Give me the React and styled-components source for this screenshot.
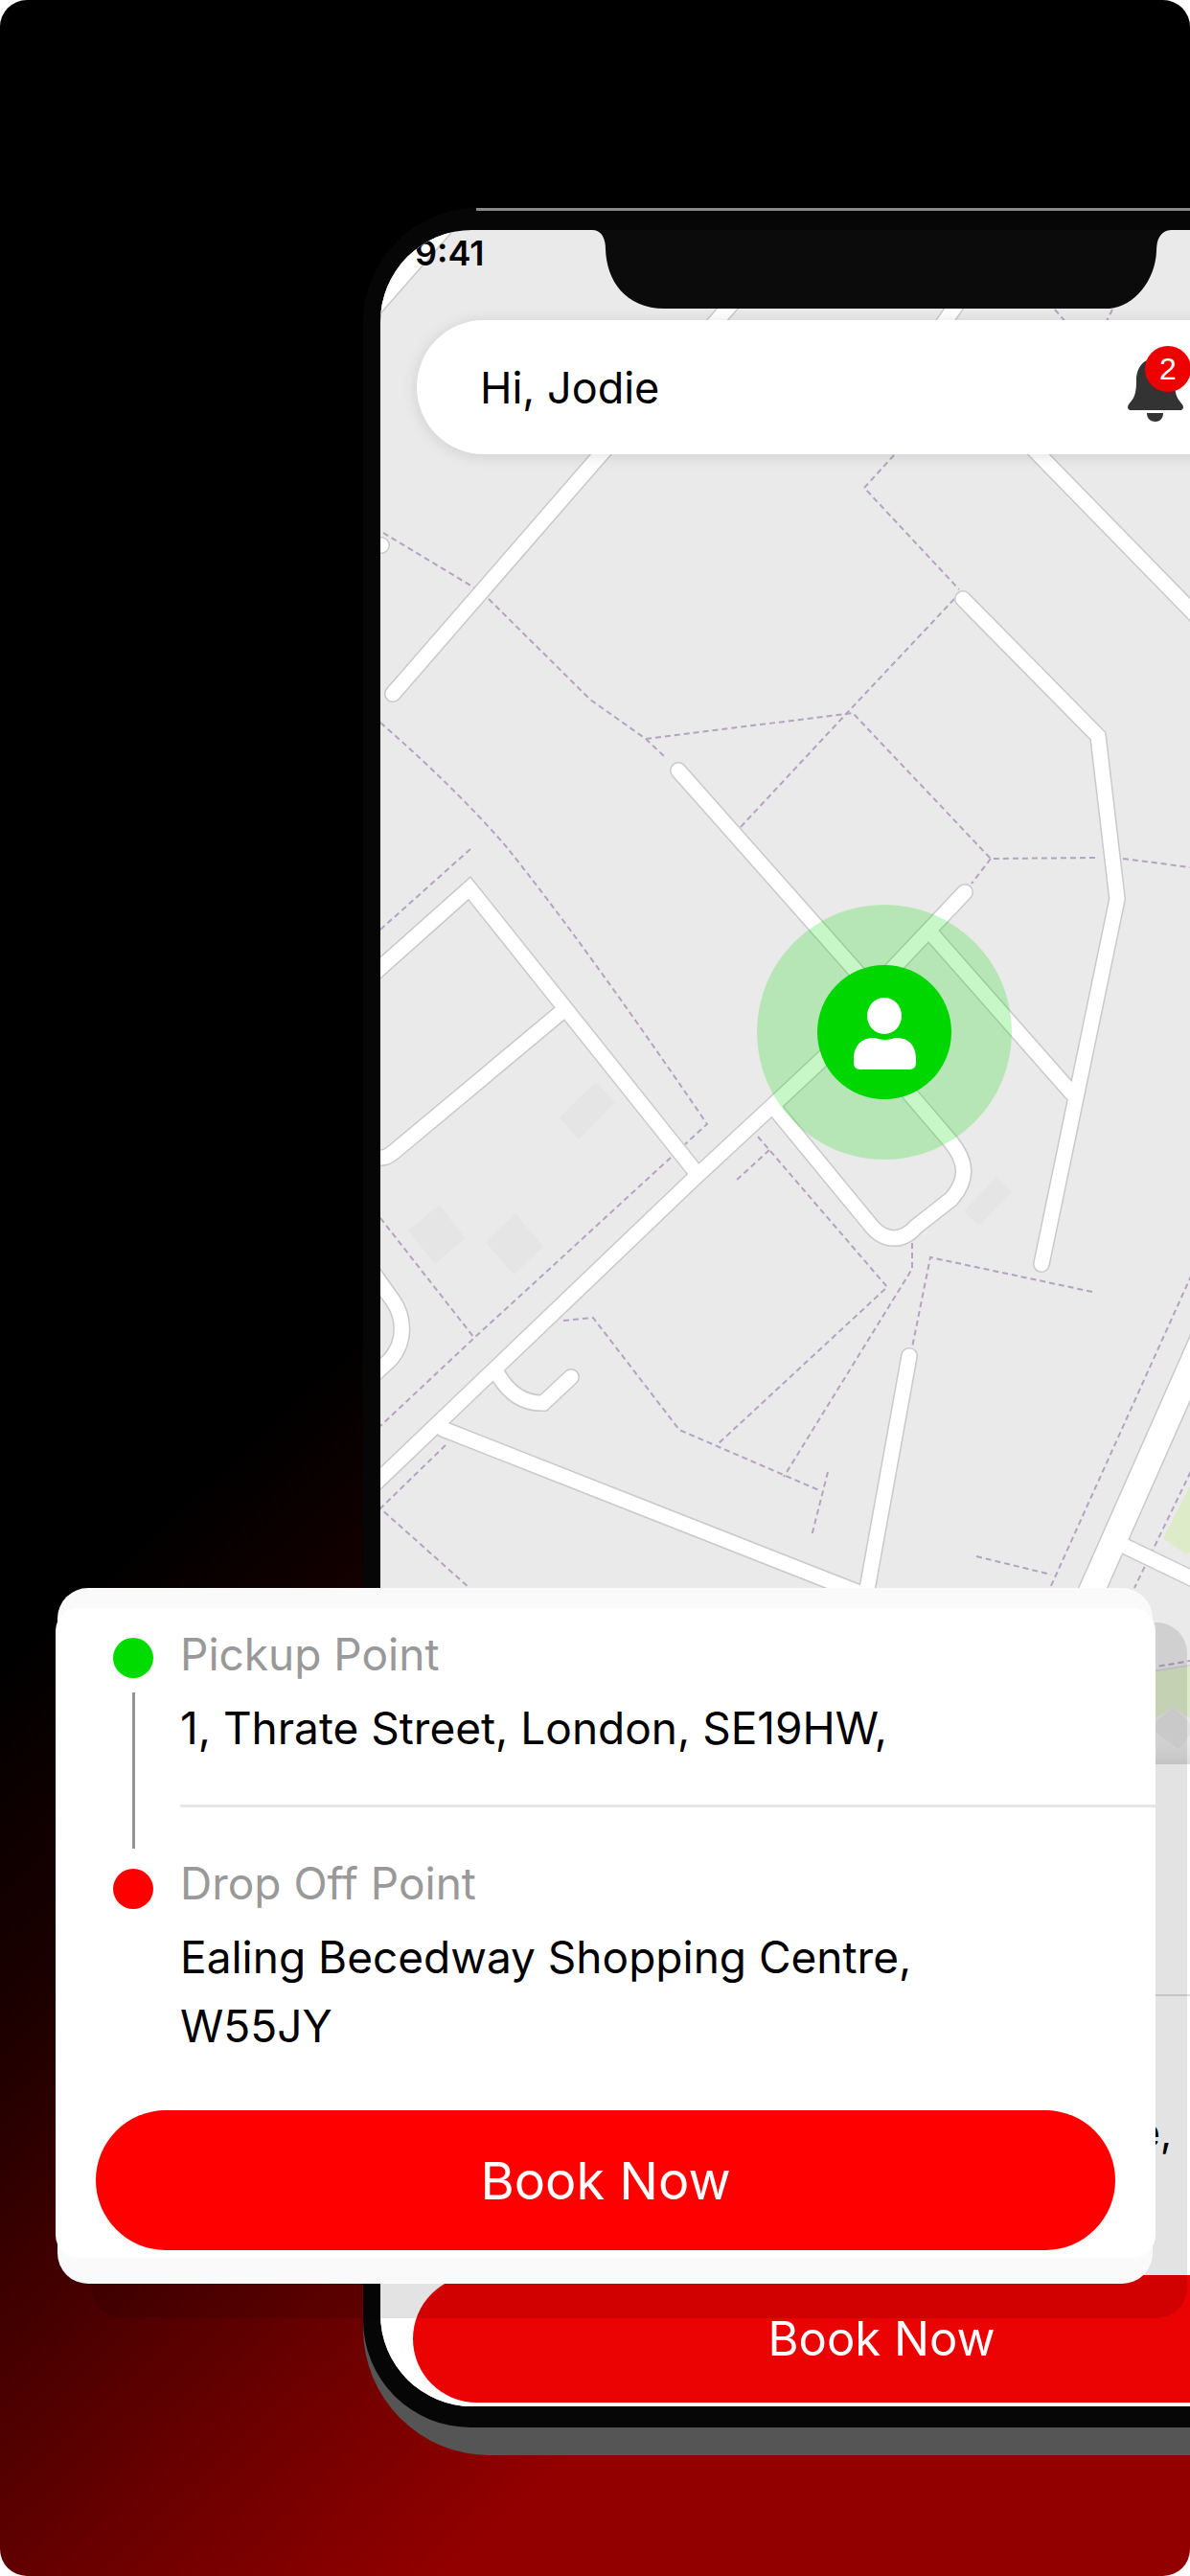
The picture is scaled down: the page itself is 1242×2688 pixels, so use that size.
import React from "react";
import styled, { createGlobalStyle } from "styled-components";

const roads = [
  "M780 298 L410 724",
  "M1012 298 L965 366",
  "M1040 429 L1242 636 L1300 695",
  "M390 569 L398 569",
  "M708 804 L894 1014 L920 1045 L905 1085 L950 1142 L992 1191 C1010 1213 1010 1231 993 1251 L956 1280 C942 1296 924 1296 910 1280 L808 1156",
  "M1007 931 L922 1021 L868 1096 L806 1154 L724 1230 L380 1559",
  "M971 973 L1119 1141",
  "M1005 625 L1146 768 L1166 938 L1087 1319",
  "M380 1025 L490 927 L727 1224",
  "M380 1208 L398 1208 Q404 1208 411 1202 L586 1056",
  "M385 1322 L410 1357 C422 1374 424 1400 407 1419 L385 1439",
  "M520 1435 Q538 1465 567 1464 L596 1437",
  "M462 1491 L902 1664",
  "M949 1415 L893 1725",
  "M1171 1612 L1300 1674",
];

const wideRoads = ["M1281 1340 L1100 1749", "M478 214 L380 326"];

const paths = [
  "M400 556 L493 612 L509 624 L616 730 L674 771 L693 789",
  "M674 771 L890 744 L1034 896 L1147 895",
  "M1034 896 L1014 922",
  "M933 475 L902 509 L1001 615",
  "M996 625 L883 745 L772 864",
  "M1172 896 L1242 905 L1300 912",
  "M397 754 Q475 822 528 883 Q610 985 738 1173 L715 1194",
  "M700 1208 L495 1396 L397 1488",
  "M397 970 L492 885",
  "M397 1271 L495 1396",
  "M791 1186 L926 1343 L748 1508",
  "M803 1200 L768 1232",
  "M952 1297 L952 1324 L818 1541",
  "M588 1378 L619 1375 L709 1492 L857 1556",
  "M864 1536 L847 1603",
  "M1140 1348 L971 1312 L952 1406",
  "M465 1508 L397 1574 L490 1657",
  "M1260 1294 L1096 1657",
  "M1019 1624 L1097 1643",
  "M1260 1500 L1184 1657",
  "M1101 323 L1120 345",
  "M1161 323 L1150 345",
  "M1190 1742 L1260 1730",
];

const buildings = [
  "M622 1129 L642 1150 L604 1189 L584 1166Z",
  "M459 1257 L485 1292 L454 1319 L426 1284Z",
  "M538 1266 L567 1301 L536 1330 L507 1296Z",
  "M1040 1228 L1056 1244 L1022 1279 L1006 1264Z",
];

const StreetMap = () => (
  <MapSvg viewBox="397 240 1046 1601" preserveAspectRatio="xMidYMin slice" aria-hidden="true">
    {buildings.map((d) => <path key={d} d={d} fill="#e5e5e5" />)}
    <path d="M1260 1516 L1214 1605 L1238 1622 L1260 1610Z" fill="#ddebc8" />
    <path d="M1190 1747 L1260 1736 L1260 1804 L1224 1781 L1190 1803Z" fill="#ddebc8" />
    <path d="M1190 1746 L1260 1735" stroke="#d6d6d6" strokeWidth="2" />
    <path d="M1224 1781 L1248 1804 L1230 1825 L1200 1803Z" fill="#e2e2e2" />
    <g fill="none" stroke="#b3a3c0" strokeWidth="2" strokeDasharray="6 4">
      {paths.map((d) => <path key={d} d={d} />)}
    </g>
    {/* casing first, white fill above, so that junctions stay open */}
    <g fill="none" stroke="#c9c9c9" strokeLinecap="round">
      {roads.map((d) => <path key={d} d={d} strokeWidth="18" />)}
      {wideRoads.map((d) => <path key={d} d={d} strokeWidth="29" />)}
    </g>
    <g fill="none" stroke="#fff" strokeLinecap="round">
      {roads.map((d) => <path key={d} d={d} strokeWidth="15" />)}
      {wideRoads.map((d) => <path key={d} d={d} strokeWidth="26" />)}
    </g>
    <circle cx="923" cy="1077" r="133" fill="#00dc00" fillOpacity="0.22" />
    <circle cx="923" cy="1077" r="70" fill="#00d600" />
    <ellipse cx="923" cy="1060" rx="18" ry="19" fill="#fff" />
    <path
      d="M891 1105 C891 1091 900 1082 913 1083 Q924 1087 934 1083 C948 1082 956 1091 956 1105 V1109 Q956 1116 949 1116 H898 Q891 1116 891 1109Z"
      fill="#fff"
    />
  </MapSvg>
);

const App = () => {
  return (
    <Stage>
      <GlobalStyle />
      <Chassis>
        <Bezel>
          <Screen>
            <StreetMap />
            <Notch viewBox="0 0 604 82" aria-hidden="true">
              <path
                d="M0 0 C10 0 14 9 14 20 C15 52 34 82 76 82 H540 C566 80 588 52 589 22 C589 10 593 1 604 0Z"
                fill="#0b0b0b"
              />
            </Notch>
            <StatusBar>9:41</StatusBar>
            <Greeting>
              <p>Hi, Jodie</p>
              <BellButton type="button" aria-label="Notifications">
                <svg viewBox="0 0 58 72" aria-hidden="true">
                  <path
                    d="M29 6 C17 6 9 15 9 29 C9 45 6 48 1 54 C-1 57 0 60 4 60 H54 C58 60 59 57 57 54 C52 48 49 45 49 29 C49 15 41 6 29 6Z"
                    fill="#333"
                  />
                  <path d="M20 63 H37 C37 69 33 72 29 72 C24 72 20 69 20 63Z" fill="#333" />
                </svg>
                <Badge>2</Badge>
              </BellButton>
            </Greeting>
            <Sheet>
              <SheetStop>
                <Address $small>Centre,</Address>
              </SheetStop>
              <BookButton type="button" $small>Book Now</BookButton>
            </Sheet>
          </Screen>
        </Bezel>
      </Chassis>

      <Card>
        <CardInner>
          <Route>
            <Rail>
              <Dot $color="#00dc00" />
              <Line />
              <Dot $color="#ff0000" />
            </Rail>
            <Stops>
              <Stop $divided>
                <Label>Pickup Point</Label>
                <Address>1, Thrate Street, London, SE19HW,</Address>
              </Stop>
              <Stop>
                <Label>Drop Off Point</Label>
                <Address>
                  Ealing Becedway Shopping Centre,
                  <br />
                  W55JY
                </Address>
              </Stop>
            </Stops>
          </Route>
          <BookButton type="button">Book Now</BookButton>
        </CardInner>
      </Card>
    </Stage>
  );
};

const GlobalStyle = createGlobalStyle`
  * {
    box-sizing: border-box;
  }
  body {
    margin: 0;
    background: #fff;
    font-family: Inter, "Liberation Sans", sans-serif;
  }
  p {
    margin: 0;
  }
  button {
    border: none;
    padding: 0;
    font-family: inherit;
    cursor: pointer;
  }
`;

/* the phone and the card share one grid cell, the card lies on top */
const Stage = styled.main`
  display: grid;
  align-items: start;
  min-height: 100vh;
  padding-bottom: 126px;
  overflow: hidden;
  border-radius: 28px;
  background: linear-gradient(137deg, #000 45%, #1c0000 55%, #3c0000 62%, #6b0000 72%, #920000 81%);

  > * {
    grid-area: 1 / 1;
  }
`;

const Chassis = styled.div`
  margin: 217px -219px 0 379px;
  padding-bottom: 29px;
  border-radius: 120px 120px 132px 132px;
  background: linear-gradient(#060606 50%, #555 50%);
`;

const Bezel = styled.div`
  padding: 23px 18px 22px;
  border-radius: 120px 120px 112px 112px;
  background: linear-gradient(#8a8a8a, #8a8a8a) 118px 0 / 100% 3px no-repeat, #060606;
`;

const Screen = styled.div`
  position: relative;
  overflow: hidden;
  border-radius: 96px;
  background: #eaeaea;
`;

const MapSvg = styled.svg`
  position: absolute;
  top: 0;
  left: 0;
  width: 100%;
`;

const Notch = styled.svg`
  position: absolute;
  top: 0;
  left: 50%;
  width: 604px;
  transform: translateX(-50%);
`;

const StatusBar = styled.div`
  position: relative;
  height: 94px;
  padding: 4px 36px;
  font-size: 36px;
  font-weight: 600;
  line-height: 40px;
`;

const Greeting = styled.header`
  position: relative;
  display: flex;
  align-items: center;
  justify-content: space-between;
  height: 140px;
  margin: 0 38px 1367px;
  padding: 0 170px 0 66px;
  border-radius: 70px;
  background: #fff;
  box-shadow: 0 2px 16px rgba(0, 0, 0, 0.12);
  font-size: 45px;
`;

const BellButton = styled.button`
  position: relative;
  width: 58px;
  height: 72px;
  background: none;

  svg {
    display: block;
    width: 100%;
  }
`;

const Badge = styled.span`
  position: absolute;
  top: -7px;
  right: -8px;
  width: 48px;
  height: 48px;
  border-radius: 50%;
  background: #ee0000;
  color: #fff;
  font-family: "Liberation Sans", sans-serif;
  font-size: 32px;
  line-height: 48px;
  text-align: center;
`;

const Sheet = styled.section`
  position: relative;
  padding: 240px 34px 4px;
  background: #fff;
  box-shadow: 0 -2px 20px rgba(0, 0, 0, 0.1);
`;

const SheetStop = styled.div`
  margin: 0 -34px 113px 0;
  padding: 106px 220px 0 0;
  border-top: 2px solid #dedede;
  text-align: right;
`;

const Card = styled.section`
  position: relative;
  margin: 1657px 39px 0 60px;
  padding: 21px 0 27px;
  border-radius: 32px;
  background: #fafafa;
  box-shadow: 36px 36px 0 rgba(0, 0, 0, 0.11);
`;

const CardInner = styled.div`
  margin: 0 -3px 0 -2px;
  padding-bottom: 8px;
  border-radius: 24px;
  background: #fff;

  > button {
    margin: 52px 42px 0;
    width: calc(100% - 84px);
  }
`;

const Route = styled.div`
  display: flex;
  gap: 28px;
  padding-left: 60px;
`;

const Rail = styled.div`
  display: flex;
  flex-direction: column;
  align-items: center;
  padding-top: 31px;
`;

const Dot = styled.span`
  width: 42px;
  height: 42px;
  border-radius: 50%;
  background: ${(props) => props.$color};
`;

const Line = styled.span`
  width: 3px;
  height: 163px;
  margin: 15px 0 21px;
  background: #949494;
`;

const Stops = styled.div`
  flex: 1;
  padding-top: 20px;
`;

const Stop = styled.div`
  ${(props) => props.$divided && `
    margin-bottom: 51px;
    padding-bottom: 44px;
    border-bottom: 3px solid #e5e5e5;
  `}
`;

const Label = styled.p`
  margin-bottom: 13px;
  color: #999;
  font-size: 46px;
  line-height: 56px;
`;

const Address = styled.p`
  color: #000;
  font-size: ${(props) => (props.$small ? "42px" : "46px")};
  line-height: 72px;
  white-space: nowrap;
`;

const BookButton = styled.button`
  display: block;
  width: 100%;
  height: ${(props) => (props.$small ? "133px" : "146px")};
  border-radius: 73px;
  background: ${(props) => (props.$small ? "#eb0202" : "#ff0000")};
  color: #fff;
  font-size: ${(props) => (props.$small ? "49px" : "54px")};
`;

export default App;
